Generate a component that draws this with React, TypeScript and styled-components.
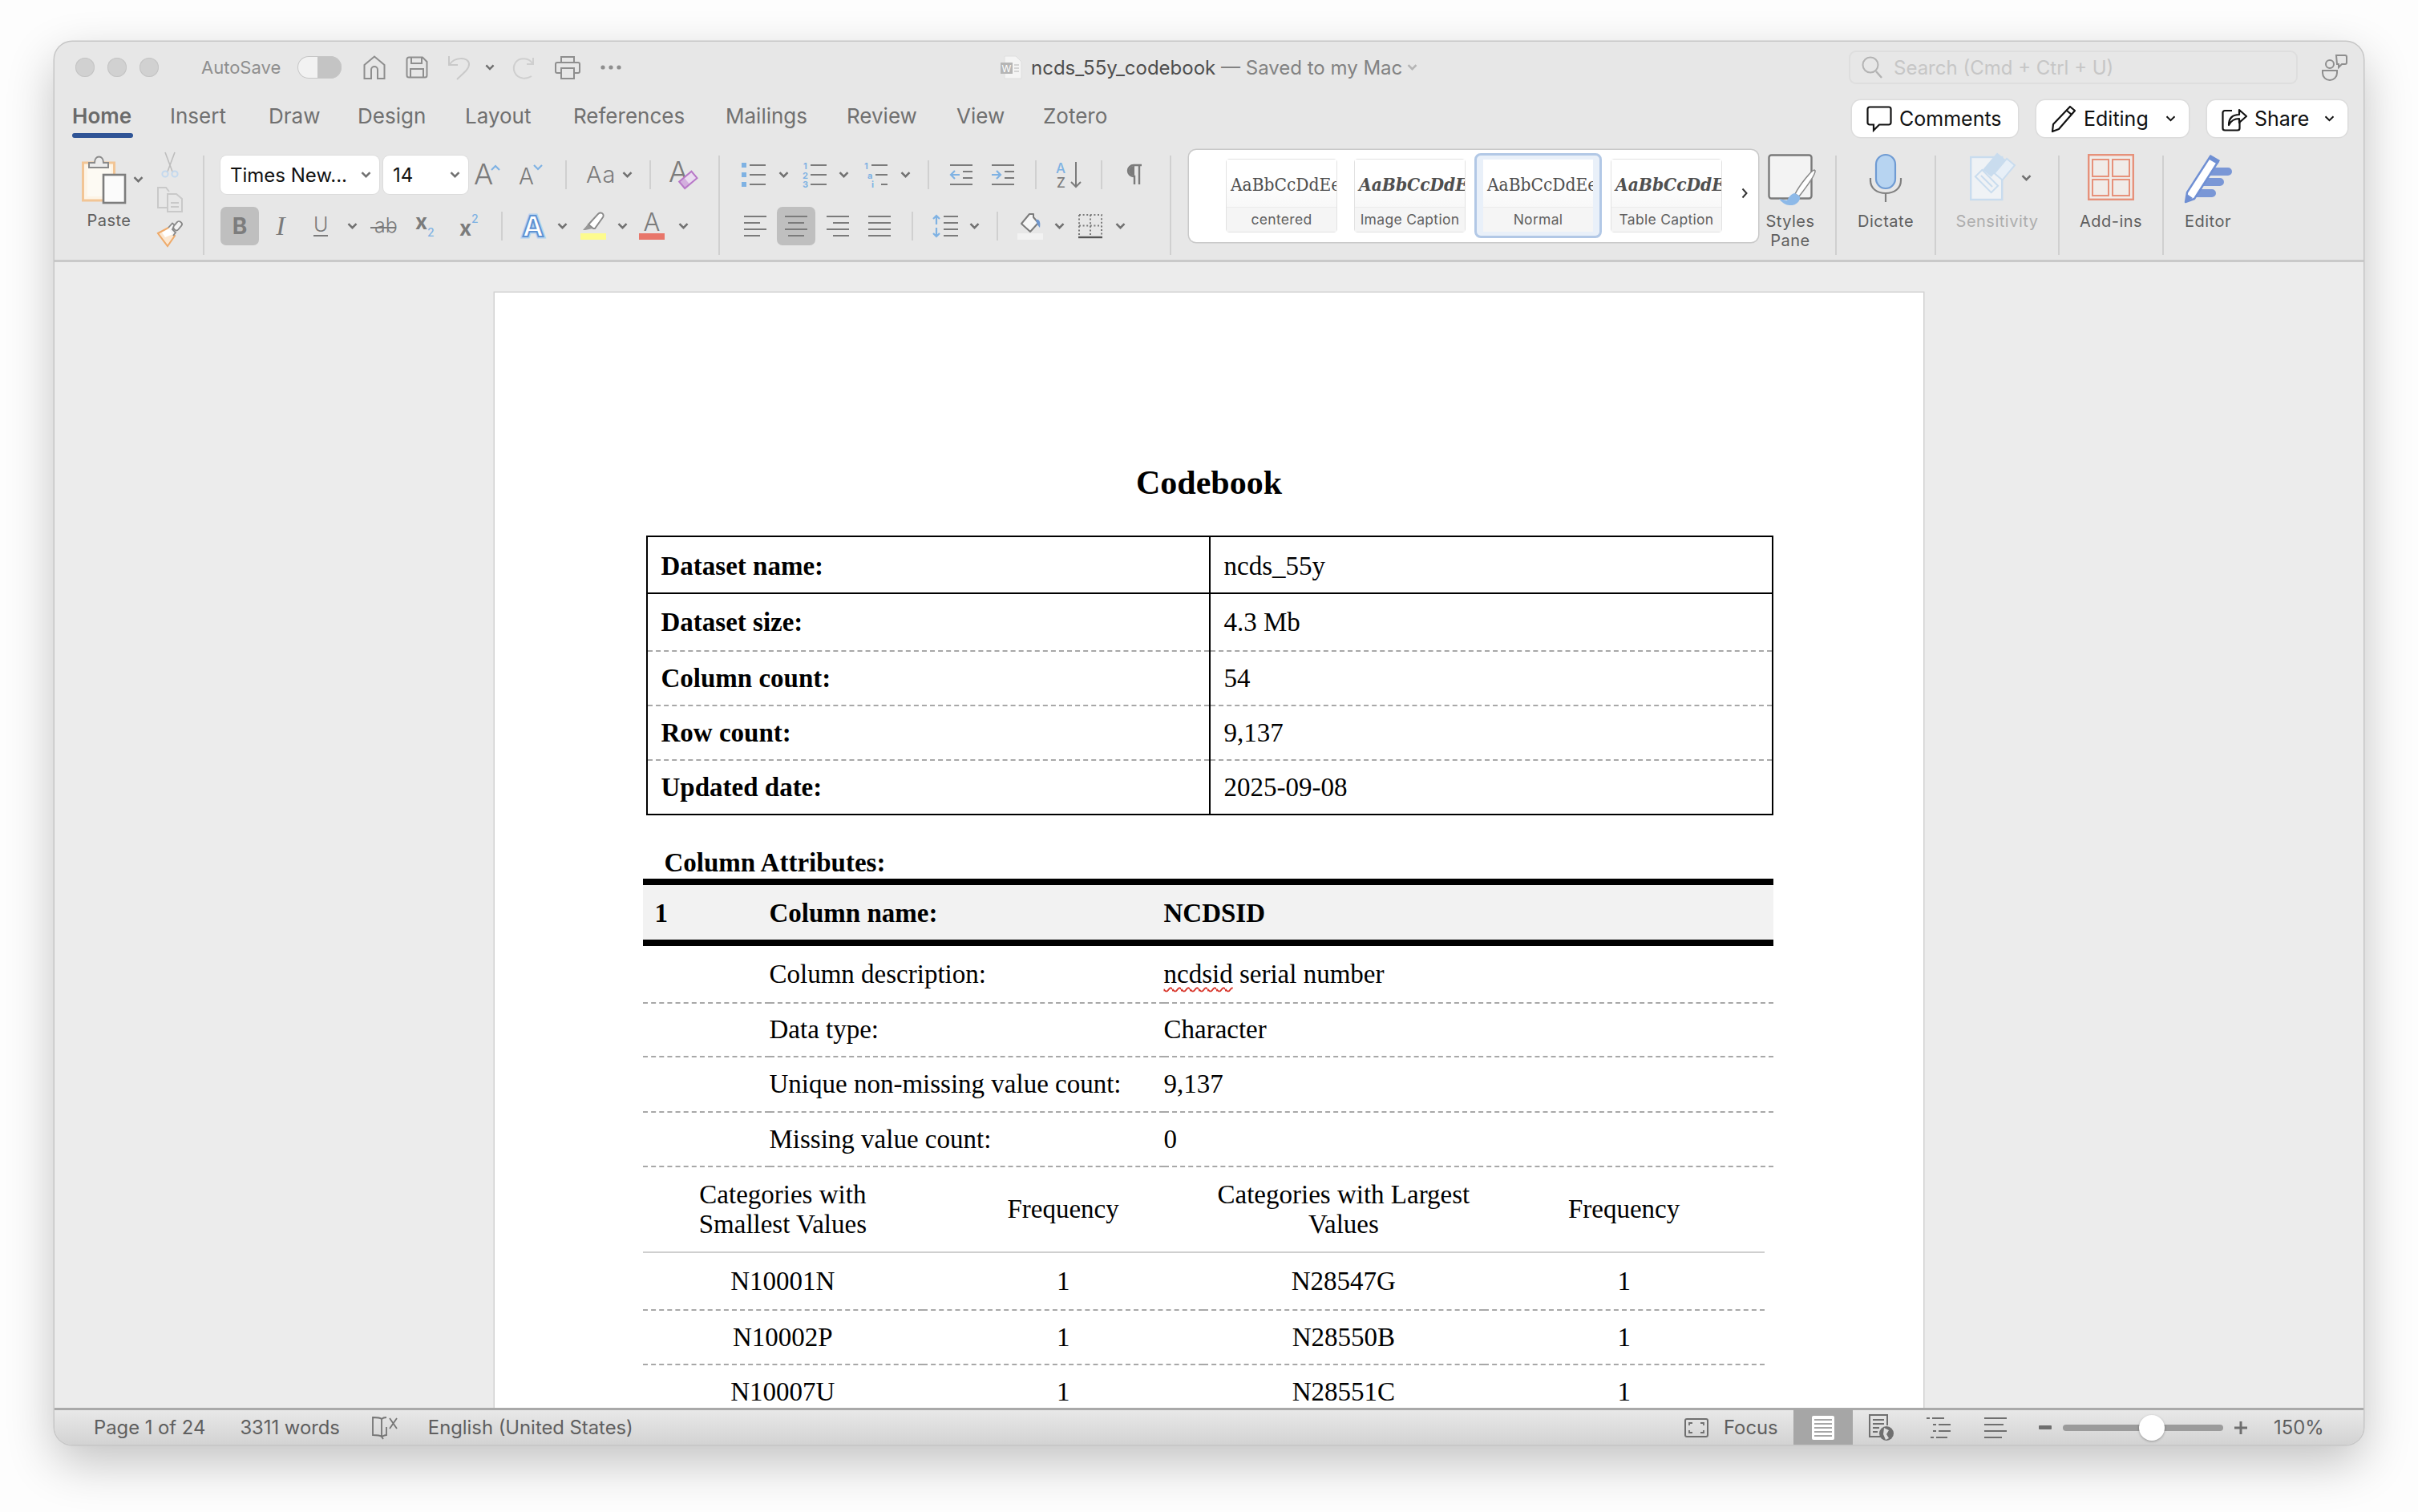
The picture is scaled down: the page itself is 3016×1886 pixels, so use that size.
import React from 'react';
import styled, { createGlobalStyle } from 'styled-components';

const GREY = '#7b7b7b';
const BLUE = '#7fb2e3';
const UI = 'Inter, "Noto Sans", sans-serif';

const GlobalStyle = createGlobalStyle`
  html, body {
    margin: 0;
    background: #fdfdfd;
    width: 3016px;
    height: 1886px;
    overflow: hidden;
  }
`;

const Ico = styled.svg`
  display: block;
  flex: none;
  overflow: visible;
`;

const svgText = { fontFamily: UI, fill: GREY } as const;

const Chevron = ({ color = '#717171', w = 13, sw = 2.6 }: { color?: string; w?: number; sw?: number }) => (
  <Ico width={w} height={8} viewBox="0 0 13 8">
    <path d="M1.5 1.2 L6.5 6.2 L11.5 1.2" fill="none" stroke={color} strokeWidth={sw} />
  </Ico>
);

const HomeIcon = () => (
  <Ico width={28} height={30} viewBox="0 0 28 30">
    <path d="M1.5 29 V12 L14 1.5 L26.5 12 V29 H18 V18 A4 4 0 0 0 10 18 V29 Z" fill="none" stroke="#8e8e8e" strokeWidth={2} />
  </Ico>
);

const SaveIcon = () => (
  <Ico width={28} height={28} viewBox="0 0 28 28">
    <path d="M1.5 4 A2.5 2.5 0 0 1 4 1.5 H21 L26.5 7 V24 A2.5 2.5 0 0 1 24 26.5 H4 A2.5 2.5 0 0 1 1.5 24 Z" fill="none" stroke="#8e8e8e" strokeWidth={2} />
    <path d="M7 2 V9 H20 V2 M6 26 V16 H22 V26" fill="none" stroke="#8e8e8e" strokeWidth={2} />
  </Ico>
);

const UndoIcon = () => (
  <Ico width={28} height={32} viewBox="0 0 28 32">
    <path d="M1 2 V13 H12 M2 12 C8 3 24 3 26 11 C27 18 18 24 11 31" fill="none" stroke="#c9c9c9" strokeWidth={2} />
  </Ico>
);

const RedoIcon = () => (
  <Ico width={28} height={30} viewBox="0 0 28 30">
    <path d="M26 3 V11 H18 M25 10 C21 3 9 2 4 9 C-1 17 3 27 13 28.5 C17 29 21 28 24 26" fill="none" stroke="#cfcfcf" strokeWidth={2} />
  </Ico>
);

const PrintIcon = () => (
  <Ico width={32} height={30} viewBox="0 0 32 30">
    <path d="M8 9 V2 H24 V9 M8 22 H3 A2 2 0 0 1 1 20 V11 A2 2 0 0 1 3 9 H29 A2 2 0 0 1 31 11 V20 A2 2 0 0 1 29 22 H24" fill="none" stroke="#8e8e8e" strokeWidth={2} />
    <rect x="8" y="16" width="16" height="13" fill="none" stroke="#8e8e8e" strokeWidth={2} />
  </Ico>
);

const DotsIcon = () => (
  <Ico width={26} height={6} viewBox="0 0 26 6">
    <circle cx="3" cy="3" r="2.6" fill="#8e8e8e" />
    <circle cx="13" cy="3" r="2.6" fill="#8e8e8e" />
    <circle cx="23" cy="3" r="2.6" fill="#8e8e8e" />
  </Ico>
);

const DocIcon = () => (
  <Ico width={28} height={30} viewBox="0 0 28 30">
    <path d="M5 1 H19 L26 8 V29 H5 Z" fill="#f4f4f4" stroke="#dedede" strokeWidth={1} />
    <rect x="0" y="9" width="15" height="14" fill="#b5b5b5" />
    <text x="1.5" y="20.5" fontFamily={UI} fontSize={12} fill="#fff">W</text>
    <path d="M17 12 H23 M17 16 H23 M17 20 H23" stroke="#c9c9c9" strokeWidth={1.5} />
  </Ico>
);

const SearchIcon = () => (
  <Ico width={26} height={28} viewBox="0 0 26 28">
    <circle cx="11" cy="11" r="9.5" fill="none" stroke="#b3b3b3" strokeWidth={2} />
    <path d="M18 19 L25 27" stroke="#b3b3b3" strokeWidth={2.4} />
  </Ico>
);

const CollabIcon = () => (
  <Ico width={32} height={34} viewBox="0 0 32 34">
    <path d="M18 2 H29 A2 2 0 0 1 31 4 V11 A2 2 0 0 1 29 13 H25 L21 17 V13 H19 Z" fill="none" stroke="#8e8e8e" strokeWidth={2} />
    <circle cx="10" cy="13" r="5" fill="none" stroke="#8e8e8e" strokeWidth={2} />
    <path d="M1 21 H19 V24 A9 9 0 0 1 1 24 Z" fill="none" stroke="#8e8e8e" strokeWidth={2} />
  </Ico>
);

const CommentIcon = () => (
  <Ico width={32} height={34} viewBox="0 0 32 32">
    <path d="M4 1.5 H28 A2.5 2.5 0 0 1 30.5 4 V21 A2.5 2.5 0 0 1 28 23.5 H16 L9 30.5 V23.5 H4 A2.5 2.5 0 0 1 1.5 21 V4 A2.5 2.5 0 0 1 4 1.5 Z" fill="none" stroke="#111" strokeWidth={2.2} />
  </Ico>
);

const PencilIcon = () => (
  <Ico width={32} height={34} viewBox="0 0 32 34">
    <path d="M24 2 L30 7 L10 30 L2 33 L3 24 Z M20 7 L26 12" fill="none" stroke="#111" strokeWidth={2.2} strokeLinejoin="round" />
  </Ico>
);

const ShareIcon = () => (
  <Ico width={32} height={34} viewBox="0 0 32 34">
    <path d="M13 7 H4 A2.5 2.5 0 0 0 1.5 9.5 V29 A2.5 2.5 0 0 0 4 31.5 H20 A2.5 2.5 0 0 0 22.5 29 V22" fill="none" stroke="#111" strokeWidth={2.2} />
    <path d="M9 25 C9 16 14 12 22 12 V6 L31 14 L22 22 V17 C16 17 12 19 9 25 Z" fill="none" stroke="#111" strokeWidth={2.2} strokeLinejoin="round" />
  </Ico>
);

const PasteIcon = () => (
  <Ico width={56} height={62} viewBox="0 0 56 62">
    <rect x="1.5" y="10" width="39" height="47" fill="#fdf4e6" stroke="#f2c595" strokeWidth={3} />
    <rect x="7" y="15" width="29" height="37" fill="#fdfaf3" />
    <path d="M9 16 V10 H16 C16 0 27 0 27 10 H33 V16 Z" fill="#ececec" stroke="#8a8a8a" strokeWidth={2} />
    <rect x="27" y="25" width="27" height="35" fill="#fbfbfb" stroke="#7d7d7d" strokeWidth={2.6} />
  </Ico>
);

const ScissorsIcon = () => (
  <Ico width={22} height={32} viewBox="0 0 22 32">
    <path d="M5 0 L14 24 M17 0 L8 24" stroke="#bdbdbd" strokeWidth={1.6} />
    <circle cx="5" cy="27" r="3.6" fill="none" stroke="#c4d9ee" strokeWidth={2} />
    <circle cx="17" cy="27" r="3.6" fill="none" stroke="#c4d9ee" strokeWidth={2} />
  </Ico>
);

const CopyIcon = () => (
  <Ico width={32} height={32} viewBox="0 0 32 32">
    <path d="M12 26 H1 V1 H11 L15 6" fill="none" stroke="#c9c9c9" strokeWidth={2} />
    <path d="M13 9 H24 L31 15 V31 H13 Z M17 20 H27 M17 25 H27" fill="none" stroke="#c9c9c9" strokeWidth={2} />
  </Ico>
);

const PainterIcon = () => (
  <Ico width={32} height={32} viewBox="0 0 32 32">
    <path d="M1 15 L14 8 L22 18 L13 31 Z" fill="#fbe7d1" stroke="#eeaa6a" strokeWidth={2} />
    <path d="M6 14 L15 9 L20 16 L10 20 Z" fill="#fff" />
    <path d="M14 8 L19 2.5 L22 5 L19 10 L23 14 L20 18" fill="#f5f5f5" stroke="#888" strokeWidth={1.8} />
    <rect x="22" y="0" width="7" height="12" rx="3" transform="rotate(40 26 6)" fill="#f3f3f3" stroke="#888" strokeWidth={1.8} />
  </Ico>
);

const GrowIcon = () => (
  <Ico width={34} height={30} viewBox="0 0 34 30">
    <text x="-1" y="27" fontSize={36} fontWeight={300} style={svgText}>A</text>
    <path d="M21 9 L26 4 L31 9" fill="none" stroke={BLUE} strokeWidth={2.2} />
  </Ico>
);

const ShrinkIcon = () => (
  <Ico width={30} height={28} viewBox="0 0 30 28">
    <text x="-1" y="26" fontSize={28} fontWeight={300} style={svgText}>A</text>
    <path d="M18 2 L23 7 L28 2" fill="none" stroke={BLUE} strokeWidth={2.2} />
  </Ico>
);

const CaseIcon = () => (
  <Ico width={34} height={24} viewBox="0 0 34 24">
    <text x="0" y="22" fontSize={29} fontWeight={300} letterSpacing={1} style={svgText}>Aa</text>
  </Ico>
);

const ClearIcon = () => (
  <Ico width={34} height={34} viewBox="0 0 34 34">
    <text x="0" y="26" fontSize={36} fontWeight={300} style={svgText}>A</text>
    <g transform="rotate(-40 24 23)">
      <rect x="14" y="18" width="20" height="11" fill="#eadcf0" stroke="#b878c8" strokeWidth={2} />
      <rect x="14" y="18" width="8" height="11" fill="#b878c8" opacity={0.45} />
    </g>
  </Ico>
);

const UnderlineIcon = () => (
  <Ico width={18} height={26} viewBox="0 0 18 26">
    <text x="0" y="20" fontSize={25} fontWeight={300} style={svgText}>U</text>
    <path d="M0 25 H18" stroke={GREY} strokeWidth={2} />
  </Ico>
);

const StrikeIcon = () => (
  <Ico width={32} height={22} viewBox="0 0 32 22">
    <text x="5" y="19" fontSize={25} fontWeight={300} style={svgText}>ab</text>
    <path d="M0 13 H32" stroke={GREY} strokeWidth={2} />
  </Ico>
);

const SubIcon = () => (
  <Ico width={24} height={28} viewBox="0 0 24 28">
    <text x="0" y="18" fontSize={26} fontWeight={700} style={svgText}>x</text>
    <text x="15" y="27" fontSize={14} fontWeight={500} style={{ fontFamily: UI, fill: BLUE }}>2</text>
  </Ico>
);

const SupIcon = () => (
  <Ico width={24} height={28} viewBox="0 0 24 28">
    <text x="0" y="26" fontSize={26} fontWeight={700} style={svgText}>x</text>
    <text x="15" y="10" fontSize={14} fontWeight={500} style={{ fontFamily: UI, fill: BLUE }}>2</text>
  </Ico>
);

const EffectIcon = () => (
  <Ico width={32} height={32} viewBox="0 0 32 32">
    <text x="16" y="29" textAnchor="middle" fontSize={36} fontWeight={700} fontFamily={UI} fill="#cfe2f6" stroke="#b4d2f0" strokeWidth={5} paintOrder="stroke">A</text>
    <text x="16" y="29" textAnchor="middle" fontSize={36} fontWeight={700} fontFamily={UI} fill="#fff" stroke="#5f92d2" strokeWidth={2}>A</text>
  </Ico>
);

const HighlightIcon = () => (
  <Ico width={32} height={34} viewBox="0 0 32 34">
    <path d="M3 22 L9 15 L15 20 L6 22 Z" fill="#999" />
    <path d="M10 15 L22 2 A3 3 0 0 1 28 6 L18 20 L16 20 Z" fill="#fff" stroke="#8a8a8a" strokeWidth={2} />
    <rect x="0" y="26" width="32" height="8" fill="#fdfb8e" />
  </Ico>
);

const FontColorIcon = () => (
  <Ico width={32} height={34} viewBox="0 0 32 34">
    <text x="16" y="23" textAnchor="middle" fontSize={31} fontWeight={300} style={svgText}>A</text>
    <rect x="0" y="26" width="32" height="8" fill="#e8766a" />
  </Ico>
);

const BulletIcon = () => (
  <Ico width={30} height={30} viewBox="0 0 30 30">
    <rect x="0" y="0" width="6" height="6" fill={BLUE} />
    <rect x="0" y="12" width="6" height="6" fill={BLUE} />
    <rect x="0" y="24" width="6" height="6" fill={BLUE} />
    <path d="M10 3 H30 M10 15 H30 M10 27 H30" stroke={GREY} strokeWidth={2} />
  </Ico>
);

const NumberIcon = () => (
  <Ico width={30} height={32} viewBox="0 0 30 32">
    <g fontFamily={UI} fontSize={11} fontWeight={700} fill={BLUE}>
      <text x="1" y="9">1</text>
      <text x="0" y="21">2</text>
      <text x="0" y="32">3</text>
    </g>
    <path d="M10 4 H30 M10 16 H30 M10 28 H30" stroke={GREY} strokeWidth={2} />
  </Ico>
);

const MultiIcon = () => (
  <Ico width={30} height={32} viewBox="0 0 30 32">
    <g fontFamily={UI} fontSize={11} fontWeight={700} fill={BLUE}>
      <text x="1" y="9">1</text>
      <text x="5" y="21">a</text>
      <text x="10" y="32">i</text>
    </g>
    <path d="M10 4 H30 M15 16 H30 M22 28 H30" stroke={GREY} strokeWidth={2} />
  </Ico>
);

const OutdentIcon = () => (
  <Ico width={28} height={26} viewBox="0 0 28 26">
    <path d="M0 1 H28 M0 25 H28 M16 9 H28 M16 17 H28" stroke={GREY} strokeWidth={2} />
    <path d="M12 13 H1 M6 8 L1 13 L6 18" fill="none" stroke={BLUE} strokeWidth={2.2} />
  </Ico>
);

const IndentIcon = () => (
  <Ico width={28} height={26} viewBox="0 0 28 26">
    <path d="M0 1 H28 M0 25 H28 M16 9 H28 M16 17 H28" stroke={GREY} strokeWidth={2} />
    <path d="M0 13 H11 M6 8 L11 13 L6 18" fill="none" stroke={BLUE} strokeWidth={2.2} />
  </Ico>
);

const SortIcon = () => (
  <Ico width={32} height={32} viewBox="0 0 32 32">
    <text x="0" y="14" fontSize={17} fontWeight={500} style={{ fontFamily: UI, fill: BLUE }}>A</text>
    <text x="1" y="32" fontSize={17} fontWeight={500} style={svgText}>Z</text>
    <path d="M25 0 V31 M19 25 L25 31 L31 25" fill="none" stroke={GREY} strokeWidth={2} />
  </Ico>
);

const PilcrowIcon = () => (
  <Ico width={20} height={26} viewBox="0 0 20 26">
    <path d="M19 1 H9 A7 7 0 0 0 9 15 H10 V25 M16 1 V25" fill="none" stroke={GREY} strokeWidth={2.4} />
    <path d="M10 2 H9 A6 6 0 0 0 9 14 H10 Z" fill={GREY} />
  </Ico>
);

const AlignIcon = ({ kind }: { kind: 'left' | 'center' | 'right' | 'justify' }) => {
  const d = {
    left: 'M0 1 H28 M0 9 H20 M0 17 H28 M0 25 H20',
    center: 'M0 1 H28 M4 9 H24 M0 17 H28 M4 25 H24',
    right: 'M0 1 H28 M8 9 H28 M0 17 H28 M8 25 H28',
    justify: 'M0 1 H28 M0 9 H28 M0 17 H28 M0 25 H28',
  }[kind];
  return (
    <Ico width={28} height={26} viewBox="0 0 28 26">
      <path d={d} stroke={GREY} strokeWidth={2} />
    </Ico>
  );
};

const SpacingIcon = () => (
  <Ico width={32} height={30} viewBox="0 0 32 30">
    <path d="M14 3 H32 M14 11 H32 M14 19 H32 M14 27 H32" stroke={GREY} strokeWidth={2} />
    <path d="M5 13 V2 M1 6 L5 2 L9 6 M5 17 V28 M1 24 L5 28 L9 24" fill="none" stroke={BLUE} strokeWidth={2.2} />
  </Ico>
);

const ShadingIcon = () => (
  <Ico width={32} height={34} viewBox="0 0 32 34">
    <path d="M5 14 L15 2 L20 2 L20 6 L26 13 L16 24 Z" fill="#f6f6f6" stroke={GREY} strokeWidth={2} strokeLinejoin="round" />
    <path d="M23 9 C28 8 29 13 28 19 C26 17 24 14 23 9 Z" fill="#6f97cf" />
    <rect x="0" y="26" width="32" height="8" fill="#f2f2f2" />
  </Ico>
);

const BordersIcon = () => (
  <Ico width={30} height={30} viewBox="0 0 30 30">
    <path d="M1 1 H29 V28 M1 1 V28 M15 1 V28 M1 14.5 H29" fill="none" stroke={GREY} strokeWidth={2} strokeDasharray="2 2.6" />
    <path d="M0 29 H30" stroke="#555" strokeWidth={2.4} />
  </Ico>
);

const StylesPaneIcon = () => (
  <Ico width={62} height={66} viewBox="0 0 62 66">
    <rect x="1.5" y="1.5" width="53" height="54" rx="3" fill="#f3f3f3" stroke="#7a7a7a" strokeWidth={2.4} />
    <path d="M58 20 C55 20 40 38 34 50 L39 53 C46 44 60 26 59 21 Z" fill="#fff" stroke="#8a8a8a" strokeWidth={1.6} />
    <path d="M14 56 L24 58 C27 52 31 49 34 49 L40 53 C41 59 35 65 27 64 C22 64 17 60 14 56 Z" fill="#8db9e8" />
  </Ico>
);

const MicIcon = () => (
  <Ico width={40} height={60} viewBox="0 0 40 60">
    <rect x="8" y="1" width="24" height="42" rx="12" fill="#b7d4f1" stroke="#6f9bd3" strokeWidth={2.2} />
    <path d="M1 30 V33 C1 43 9 49 20 49 C31 49 39 43 39 33 V30 M20 49 V60" fill="none" stroke="#808080" strokeWidth={2.2} />
  </Ico>
);

const SensitivityIcon = () => (
  <Ico width={54} height={58} viewBox="0 0 54 58">
    <rect x="1.2" y="4" width="39" height="53" fill="#eff2f5" stroke="#c9dcee" strokeWidth={2.4} />
    <g transform="rotate(45 21 34)" fill="none" stroke="#c9dcee" strokeWidth={2}>
      <rect x="7" y="28" width="28" height="12" />
      <path d="M11 34 H31" />
    </g>
    <g transform="rotate(40 34 14)">
      <rect x="24" y="2" width="14" height="28" fill="#c9dcee" />
      <rect x="38" y="0" width="13" height="24" fill="#e7eff7" stroke="#c9dcee" strokeWidth={2} />
    </g>
  </Ico>
);

const AddinsIcon = () => (
  <Ico width={58} height={58} viewBox="0 0 58 58">
    <rect x="1.2" y="1.2" width="55.6" height="55.6" fill="#f0ece9" stroke="#e6917a" strokeWidth={2.4} />
    <rect x="6" y="7" width="20" height="21" fill="none" stroke="#e6917a" strokeWidth={2} />
    <rect x="31" y="7" width="21" height="21" fill="none" stroke="#e6917a" strokeWidth={2} />
    <rect x="6" y="32" width="20" height="20" fill="none" stroke="#e6917a" strokeWidth={2} />
    <rect x="31" y="32" width="21" height="20" fill="none" stroke="#e6917a" strokeWidth={2} />
  </Ico>
);

const EditorIcon = () => (
  <Ico width={62} height={62} viewBox="0 0 62 62">
    <path d="M37 17 H56 A5 5 0 0 1 56 27 H33 Z M29 30 H46 A5 5 0 0 1 46 40 H24 Z M19 44 H36 A5 5 0 0 1 36 54 H14 Z" fill="#7a97d6" />
    <path d="M34 3 L44 9 L14 56 L3 60 L5 48 Z" fill="#fff" stroke="#6f8fd3" strokeWidth={2.4} strokeLinejoin="round" />
    <path d="M34 1 L46 8 L43 13 L31 6 Z" fill="#6f8fd3" />
    <path d="M5 50 L12 55 L2 61 Z" fill="#6f8fd3" />
  </Ico>
);

const BookIcon = () => (
  <Ico width={32} height={30} viewBox="0 0 32 30">
    <path d="M12 4 C10 2 6 2 1 2 V24 C6 24 10 24 12 26 L14 29 M12 4 V26 M12 4 C14 2 16 2 18 2 M18 14 V24 C16 24 14 25 12 26" fill="none" stroke="#757575" strokeWidth={1.8} />
    <path d="M22 3 L31 16 M31 3 L22 16" stroke="#757575" strokeWidth={1.8} />
  </Ico>
);

const FocusIcon = () => (
  <Ico width={30} height={24} viewBox="0 0 30 24">
    <rect x="1" y="1" width="28" height="22" rx="2" fill="none" stroke="#6f6f6f" strokeWidth={2} />
    <path d="M6 9 V6 H10 M24 9 V6 H20 M6 15 V18 H10 M24 15 V18 H20" fill="none" stroke="#6f6f6f" strokeWidth={1.8} />
  </Ico>
);

const PrintViewIcon = () => (
  <Ico width={28} height={30} viewBox="0 0 28 30">
    <rect x="0" y="0" width="28" height="30" rx="2" fill="#fff" />
    <path d="M3 5 H25 M3 10 H25 M3 15 H25 M3 20 H25 M3 25 H25" stroke="#a6a6a6" strokeWidth={2} />
  </Ico>
);

const WebViewIcon = () => (
  <Ico width={32} height={34} viewBox="0 0 32 34">
    <path d="M16 28 H2 V1 H24 V14" fill="none" stroke="#6f6f6f" strokeWidth={2} />
    <path d="M6 7 H20 M6 12 H20 M6 17 H14 M6 22 H12" stroke="#6f6f6f" strokeWidth={2} />
    <circle cx="23" cy="24" r="9" fill="#6f6f6f" />
    <path d="M20 17 L26 20 L23 25 L26 30 L22 32 L19 25 Z" fill="#ddd" />
  </Ico>
);

const OutlineViewIcon = () => (
  <Ico width={30} height={28} viewBox="0 0 30 28">
    <path d="M0 2 H4 M7 2 H22 M8 10 H12 M15 10 H30 M8 18 H12 M15 18 H30 M5 26 H9 M12 26 H26" stroke="#6f6f6f" strokeWidth={2} />
  </Ico>
);

const DraftViewIcon = () => (
  <Ico width={28} height={28} viewBox="0 0 28 28">
    <path d="M0 2 H28 M0 10 H24 M0 18 H28 M0 26 H22" stroke="#6f6f6f" strokeWidth={2.2} />
  </Ico>
);

const App = () => (
  <>
    <GlobalStyle />
    <Shell>
      <Window>
        <TitleBar>
          <QuickAccess>
            <Lights>
              <Light />
              <Light />
              <Light />
            </Lights>
            <AutoSave>AutoSave</AutoSave>
            <Toggle />
            <HomeIcon />
            <SaveIcon />
            <UndoIcon />
            <UndoChevron><Chevron color="#6f6f6f" w={12} /></UndoChevron>
            <RedoIcon />
            <PrintIcon />
            <DotsIcon />
          </QuickAccess>
          <DocTitle>
            <DocIcon />
            <TitleText>
              ncds_55y_codebook <Saved>— Saved to my Mac</Saved>
            </TitleText>
            <Chevron color="#b5b5b5" w={13} />
          </DocTitle>
          <SearchBox>
            <SearchIcon />
            <SearchText>Search (Cmd + Ctrl + U)</SearchText>
          </SearchBox>
          <CollabIcon />
        </TitleBar>

        <TabRow>
          <Tab $w={122} $active>Home</Tab>
          <Tab $w={123}>Insert</Tab>
          <Tab $w={111}>Draw</Tab>
          <Tab $w={134}>Design</Tab>
          <Tab $w={135}>Layout</Tab>
          <Tab $w={190}>References</Tab>
          <Tab $w={151}>Mailings</Tab>
          <Tab $w={137}>Review</Tab>
          <Tab $w={108}>View</Tab>
          <Tab $w={100}>Zotero</Tab>
          <TabActions>
            <PillButton $w={207}>
              <CommentIcon />
              Comments
            </PillButton>
            <PillButton $w={190}>
              <PencilIcon />
              Editing
              <PillChevron><Chevron color="#111" w={15} sw={2} /></PillChevron>
            </PillButton>
            <PillButton $w={175}>
              <ShareIcon />
              Share
              <PillChevron><Chevron color="#111" w={15} sw={2} /></PillChevron>
            </PillButton>
          </TabActions>
        </TabRow>

        <Ribbon>
          <PasteGroup>
            <PasteCol>
              <PasteTop>
                <PasteIcon />
                <Chevron />
              </PasteTop>
              <ToolLabel>Paste</ToolLabel>
            </PasteCol>
            <ClipCol>
              <ScissorsIcon />
              <CopyIcon />
              <PainterIcon />
            </ClipCol>
          </PasteGroup>
          <GroupSep />

          <FontGroup>
            <ToolRow>
              <Select $w={198}>
                Times New...
                <Chevron />
              </Select>
              <Select $w={106} $left={5}>
                14
                <Chevron />
              </Select>
              <Tool $w={50}><GrowIcon /></Tool>
              <Tool $w={58}><ShrinkIcon /></Tool>
              <Tool $w={28}><RowSep /></Tool>
              <Tool $w={56}><CaseIcon /></Tool>
              <Tool $w={12}><Chevron /></Tool>
              <Tool $w={46}><RowSep /></Tool>
              <Tool $w={34}><ClearIcon /></Tool>
            </ToolRow>
            <ToolRow>
              <ActiveTool><BoldMark>B</BoldMark></ActiveTool>
              <Tool $w={54}><ItalicMark>I</ItalicMark></Tool>
              <Tool $w={46}><UnderlineIcon /></Tool>
              <Tool $w={32}><Chevron /></Tool>
              <Tool $w={46}><StrikeIcon /></Tool>
              <Tool $w={58}><SubIcon /></Tool>
              <Tool $w={52}><SupIcon /></Tool>
              <Tool $w={30}><RowSep /></Tool>
              <Tool $w={48}><EffectIcon /></Tool>
              <Tool $w={24}><Chevron /></Tool>
              <Tool $w={54}><HighlightIcon /></Tool>
              <Tool $w={18}><Chevron /></Tool>
              <Tool $w={56}><FontColorIcon /></Tool>
              <Tool $w={22}><Chevron /></Tool>
            </ToolRow>
          </FontGroup>
          <GroupSep />

          <ParaGroup>
            <ToolRow>
              <Tool $w={50}><BulletIcon /></Tool>
              <Tool $w={24}><Chevron /></Tool>
              <Tool $w={54}><NumberIcon /></Tool>
              <Tool $w={18}><Chevron /></Tool>
              <Tool $w={62}><MultiIcon /></Tool>
              <Tool $w={12}><Chevron /></Tool>
              <Tool $w={46}><RowSep /></Tool>
              <Tool $w={36}><OutdentIcon /></Tool>
              <Tool $w={68}><IndentIcon /></Tool>
              <Tool $w={14}><RowSep /></Tool>
              <Tool $w={68}><SortIcon /></Tool>
              <Tool $w={14}><RowSep /></Tool>
              <Tool $w={68}><PilcrowIcon /></Tool>
            </ToolRow>
            <ToolRow>
              <Tool $w={54}><AlignIcon kind="left" /></Tool>
              <ActiveTool><AlignIcon kind="center" /></ActiveTool>
              <Tool $w={56}><AlignIcon kind="right" /></Tool>
              <Tool $w={48}><AlignIcon kind="justify" /></Tool>
              <Tool $w={34}><RowSep /></Tool>
              <Tool $w={48}><SpacingIcon /></Tool>
              <Tool $w={24}><Chevron /></Tool>
              <Tool $w={34}><RowSep /></Tool>
              <Tool $w={48}><ShadingIcon /></Tool>
              <Tool $w={24}><Chevron /></Tool>
              <Tool $w={54}><BordersIcon /></Tool>
              <Tool $w={20}><Chevron /></Tool>
            </ToolRow>
          </ParaGroup>
          <GroupSep />

          <Gallery>
            <StyleTile label="centered" />
            <StyleTile label="Image Caption" emphasis />
            <StyleTile label="Normal" selected />
            <StyleTile label="Table Caption" emphasis />
            <GalleryNext>
              <Ico width={8} height={14} viewBox="0 0 8 14">
                <path d="M1.5 1.5 L6.5 7 L1.5 12.5" fill="none" stroke="#333" strokeWidth={2} />
              </Ico>
            </GalleryNext>
          </Gallery>

          <BigTool $w={80} $after={16}>
            <IconSlot $lead={5}><StylesPaneIcon /></IconSlot>
            <ToolLabel>Styles<br />Pane</ToolLabel>
          </BigTool>
          <GroupSep />
          <BigTool $w={122}>
            <IconSlot><MicIcon /></IconSlot>
            <ToolLabel>Dictate</ToolLabel>
          </BigTool>
          <GroupSep />
          <BigTool $w={152}>
            <IconSlot $trail={14}>
              <SensitivityIcon />
              <SensitivityChevron><Chevron /></SensitivityChevron>
            </IconSlot>
            <ToolLabel $muted>Sensitivity</ToolLabel>
          </BigTool>
          <GroupSep />
          <BigTool $w={128}>
            <IconSlot><AddinsIcon /></IconSlot>
            <ToolLabel>Add-ins</ToolLabel>
          </BigTool>
          <GroupSep />
          <BigTool $w={110}>
            <IconSlot><EditorIcon /></IconSlot>
            <ToolLabel>Editor</ToolLabel>
          </BigTool>
        </Ribbon>

        <Canvas>
          <Page>
            <DocTitleLine>Codebook</DocTitleLine>
            <InfoTable>
              <colgroup>
                <col width={702} />
                <col />
              </colgroup>
              <tbody>
                <InfoRow $h={71} $solid $lift>
                  <InfoKey>Dataset name:</InfoKey>
                  <InfoValue>ncds_55y</InfoValue>
                </InfoRow>
                <InfoRow $h={72}>
                  <InfoKey>Dataset size:</InfoKey>
                  <InfoValue>4.3 Mb</InfoValue>
                </InfoRow>
                <InfoRow $h={68}>
                  <InfoKey>Column count:</InfoKey>
                  <InfoValue>54</InfoValue>
                </InfoRow>
                <InfoRow $h={68}>
                  <InfoKey>Row count:</InfoKey>
                  <InfoValue>9,137</InfoValue>
                </InfoRow>
                <InfoRow $h={68}>
                  <InfoKey>Updated date:</InfoKey>
                  <InfoValue>2025-09-08</InfoValue>
                </InfoRow>
              </tbody>
            </InfoTable>

            <SectionHeading>Column Attributes:</SectionHeading>
            <AttrTable>
              <colgroup>
                <col width={158} />
                <col width={492} />
                <col />
              </colgroup>
              <tbody>
                <AttrHead>
                  <AttrIndex>1</AttrIndex>
                  <AttrCell>Column name:</AttrCell>
                  <AttrCell>NCDSID</AttrCell>
                </AttrHead>
                <AttrRow $h={75}>
                  <AttrCell />
                  <AttrCell>Column description:</AttrCell>
                  <AttrCell><Misspelt>ncdsid</Misspelt> serial number</AttrCell>
                </AttrRow>
                <AttrRow $h={67}>
                  <AttrCell />
                  <AttrCell>Data type:</AttrCell>
                  <AttrCell>Character</AttrCell>
                </AttrRow>
                <AttrRow $h={69}>
                  <AttrCell />
                  <AttrCell>Unique non-missing value count:</AttrCell>
                  <AttrCell>9,137</AttrCell>
                </AttrRow>
                <AttrRow $h={68}>
                  <AttrCell />
                  <AttrCell>Missing value count:</AttrCell>
                  <AttrCell>0</AttrCell>
                </AttrRow>
              </tbody>
            </AttrTable>

            <CategoryTable>
              <tbody>
                <CategoryRow $h={106} $head>
                  <CategoryCell>Categories with<br />Smallest Values</CategoryCell>
                  <CategoryCell>Frequency</CategoryCell>
                  <CategoryCell>Categories with Largest<br />Values</CategoryCell>
                  <CategoryCell>Frequency</CategoryCell>
                </CategoryRow>
                <CategoryRow $h={72}>
                  <CategoryCell>N10001N</CategoryCell>
                  <CategoryCell>1</CategoryCell>
                  <CategoryCell>N28547G</CategoryCell>
                  <CategoryCell>1</CategoryCell>
                </CategoryRow>
                <CategoryRow $h={68}>
                  <CategoryCell>N10002P</CategoryCell>
                  <CategoryCell>1</CategoryCell>
                  <CategoryCell>N28550B</CategoryCell>
                  <CategoryCell>1</CategoryCell>
                </CategoryRow>
                <CategoryRow $h={68}>
                  <CategoryCell>N10007U</CategoryCell>
                  <CategoryCell>1</CategoryCell>
                  <CategoryCell>N28551C</CategoryCell>
                  <CategoryCell>1</CategoryCell>
                </CategoryRow>
              </tbody>
            </CategoryTable>
          </Page>
        </Canvas>

        <StatusBar>
          <StatusLeft>
            <StatusText>Page 1 of 24</StatusText>
            <StatusText>3311 words</StatusText>
            <BookSlot><BookIcon /></BookSlot>
            <StatusText>English (United States)</StatusText>
          </StatusLeft>
          <StatusRight>
            <FocusIcon />
            <FocusLabel>Focus</FocusLabel>
            <ViewActive><PrintViewIcon /></ViewActive>
            <ViewSlot $w={70}><WebViewIcon /></ViewSlot>
            <ViewSlot $w={74}><OutlineViewIcon /></ViewSlot>
            <ViewSlot $w={68}><DraftViewIcon /></ViewSlot>
            <ZoomMinus />
            <ZoomTrack>
              <ZoomThumb />
            </ZoomTrack>
            <ZoomPlus>
              <Ico width={16} height={16} viewBox="0 0 16 16">
                <path d="M0 8 H16 M8 0 V16" stroke="#6f6f6f" strokeWidth={3} />
              </Ico>
            </ZoomPlus>
            <ZoomValue>150%</ZoomValue>
          </StatusRight>
        </StatusBar>
      </Window>
    </Shell>
  </>
);

const StyleTile = ({ label, emphasis, selected }: { label: string; emphasis?: boolean; selected?: boolean }) => (
  <Tile $selected={selected}>
    <TileSample $emphasis={emphasis}>AaBbCcDdEe</TileSample>
    <TileLabel>{label}</TileLabel>
  </Tile>
);

const Shell = styled.div`
  box-sizing: border-box;
  width: 3016px;
  height: 1886px;
  padding: 52px 68px 84px 68px;
  font-family: ${UI};
`;

const Window = styled.div`
  box-sizing: border-box;
  width: 2880px;
  height: 1750px;
  display: flex;
  flex-direction: column;
  overflow: hidden;
  background: #e7e7e7;
  border-radius: 22px;
  box-shadow: 0 0 0 1.5px #c6c6c6, 0 22px 60px rgba(0, 0, 0, 0.24);
`;

const TitleBar = styled.div`
  flex: none;
  height: 64px;
  display: flex;
  align-items: center;
`;

const QuickAccess = styled.div`
  flex: none;
  width: 1180px;
  box-sizing: border-box;
  padding-left: 26px;
  display: flex;
  align-items: center;
  gap: 25px;
`;

const UndoChevron = styled.div`
  margin: 0 -3px 0 -7px;
`;

const Lights = styled.div`
  display: flex;
  gap: 16px;
  margin-right: 28px;
`;

const Light = styled.div`
  width: 24px;
  height: 24px;
  border-radius: 50%;
  background: #d1d1d1;
  box-shadow: inset 0 0 0 1px #c4c4c4;
`;

const AutoSave = styled.span`
  width: 100px;
  margin-right: -5px;
  font-size: 22px;
  color: #8f8f8f;
`;

const Toggle = styled.div`
  width: 55px;
  height: 28px;
  border-radius: 14px;
  background: linear-gradient(90deg, #f2f2f2 0 45%, #c4c4c4 45%);
  box-shadow: inset 0 0 0 1px #c6c6c6;
  margin-right: 2px;
`;

const DocTitle = styled.div`
  flex: none;
  width: 1058px;
  display: flex;
  align-items: center;
  gap: 10px;
`;

const TitleText = styled.span`
  font-size: 24px;
  color: #4e4e4e;
  margin-right: -4px;
  white-space: pre;
`;

const Saved = styled.span`
  color: #828282;
`;

const SearchBox = styled.div`
  flex: none;
  box-sizing: border-box;
  width: 560px;
  height: 42px;
  margin-right: 30px;
  padding-left: 14px;
  display: flex;
  align-items: center;
  gap: 14px;
  border: 2px solid #dedede;
  border-radius: 9px;
`;

const SearchText = styled.span`
  font-size: 24px;
  color: #c6c6c6;
`;

const TabRow = styled.div`
  flex: none;
  height: 59px;
  box-sizing: border-box;
  padding: 0 20px 2px 22px;
  display: flex;
  align-items: center;
`;

const Tab = styled.div<{ $w: number; $active?: boolean }>`
  position: relative;
  flex: none;
  width: ${(p) => p.$w}px;
  font-size: 26px;
  font-weight: ${(p) => (p.$active ? 600 : 400)};
  color: ${(p) => (p.$active ? '#6a6a6a' : '#707070')};

  &::after {
    content: '';
    display: ${(p) => (p.$active ? 'block' : 'none')};
    position: absolute;
    left: 0;
    bottom: -12px;
    width: 76px;
    height: 6px;
    border-radius: 3px;
    background: #2f5496;
  }
`;

const TabActions = styled.div`
  margin: 6px 0 0 auto;
  display: flex;
  gap: 23px;
`;

const PillButton = styled.div<{ $w: number }>`
  box-sizing: border-box;
  width: ${(p) => p.$w}px;
  height: 46px;
  padding: 0 15px 0 18px;
  display: flex;
  align-items: center;
  gap: 9px;
  background: #fff;
  border-radius: 11px;
  box-shadow: 0 0 0 1.5px #dcdcdc;
  font-size: 25px;
  color: #111;
`;

const PillChevron = styled.div`
  margin-left: auto;
`;

const Ribbon = styled.div`
  flex: none;
  height: 152px;
  box-sizing: border-box;
  display: flex;
  align-items: flex-start;
  border-bottom: 3px solid #c9c9c9;
`;

const GroupSep = styled.div`
  flex: none;
  width: 2px;
  height: 124px;
  margin-top: 19px;
  background: #d0d0d0;
`;

const PasteGroup = styled.div`
  flex: none;
  width: 185px;
  box-sizing: border-box;
  padding: 18px 0 0 34px;
  display: flex;
`;

const PasteCol = styled.div`
  width: 92px;
  display: flex;
  flex-direction: column;
  align-items: flex-start;
  gap: 6px;
`;

const PasteTop = styled.div`
  display: flex;
  align-items: center;
  gap: 8px;
  margin-bottom: 2px;
`;

const ClipCol = styled.div`
  display: flex;
  flex-direction: column;
  align-items: center;
  gap: 11px;
  width: 36px;
  margin-top: -3px;
`;

const ToolLabel = styled.div<{ $muted?: boolean }>`
  font-size: 20px;
  line-height: 24px;
  letter-spacing: 0.5px;
  text-align: center;
  color: ${(p) => (p.$muted ? '#aeaeae' : '#5f5f5f')};
  ${PasteCol} & {
    width: 68px;
  }
`;

const FontGroup = styled.div`
  flex: none;
  width: 641px;
  box-sizing: border-box;
  padding: 19px 0 0 20px;
  display: flex;
  flex-direction: column;
  gap: 16px;
`;

const ParaGroup = styled.div`
  flex: none;
  width: 561px;
  box-sizing: border-box;
  padding: 19px 0 0 17px;
  display: flex;
  flex-direction: column;
  gap: 16px;
`;

const ToolRow = styled.div`
  height: 48px;
  display: flex;
  align-items: center;
`;

const Tool = styled.div<{ $w: number }>`
  flex: none;
  width: ${(p) => p.$w}px;
  height: 48px;
  display: flex;
  align-items: center;
  justify-content: center;
`;

const ActiveTool = styled.div`
  flex: none;
  width: 48px;
  height: 48px;
  display: flex;
  align-items: center;
  justify-content: center;
  background: #bfbfbf;
  border-radius: 7px;
`;

const BoldMark = styled.span`
  font-size: 28px;
  font-weight: 700;
  color: #7d7d7d;
`;

const ItalicMark = styled.span`
  font-family: 'Liberation Serif', serif;
  font-style: italic;
  font-size: 34px;
  color: ${GREY};
`;

const RowSep = styled.div`
  flex: none;
  width: 2px;
  height: 36px;
  background: #d0d0d0;
`;

const Select = styled.div<{ $w: number; $left?: number }>`
  flex: none;
  box-sizing: border-box;
  width: ${(p) => p.$w}px;
  height: 48px;
  margin-left: ${(p) => p.$left || 0}px;
  padding: 0 10px 0 12px;
  display: flex;
  align-items: center;
  justify-content: space-between;
  background: #fff;
  border-radius: 8px;
  box-shadow: 0 0 0 1px #dcdcdc;
  font-size: 24px;
  color: #111;
`;

const Gallery = styled.div`
  flex: none;
  box-sizing: border-box;
  width: 710px;
  height: 115px;
  margin: 12px 0 0 22px;
  padding: 11px 0 0 46px;
  display: flex;
  gap: 21px;
  background: #fff;
  border-radius: 9px;
  box-shadow: 0 0 0 1.5px #c9c9c9;
`;

const Tile = styled.div<{ $selected?: boolean }>`
  position: relative;
  flex: none;
  box-sizing: border-box;
  width: 139px;
  height: 92px;
  display: flex;
  flex-direction: column;
  background: linear-gradient(#fff 40%, #f6f6f6);
  border: 1.5px solid #e2e2e2;
  border-radius: 4px;

  &::before {
    content: '';
    display: ${(p) => (p.$selected ? 'block' : 'none')};
    position: absolute;
    inset: -8px -11px;
    z-index: 0;
    background: #e9f0f9;
    border: 3px solid #b2c8e6;
    border-radius: 8px;
  }
`;

const TileSample = styled.div<{ $emphasis?: boolean }>`
  position: relative;
  flex: 1;
  padding: 18px 0 0 5px;
  overflow: hidden;
  white-space: nowrap;
  font-family: 'DejaVu Serif Condensed', 'DejaVu Serif', serif;
  font-stretch: condensed;
  font-size: 22.5px;
  font-style: ${(p) => (p.$emphasis ? 'italic' : 'normal')};
  font-weight: ${(p) => (p.$emphasis ? 700 : 400)};
  color: #4f4f4f;
  background: linear-gradient(#fff 40%, #f8f8f8);
`;

const TileLabel = styled.div`
  position: relative;
  height: 30px;
  line-height: 30px;
  text-align: center;
  white-space: nowrap;
  overflow: hidden;
  font-size: 17.5px;
  letter-spacing: 0.3px;
  color: #5f5f5f;
  background: #f5f5f5;
  border-top: 1px solid #ececec;
`;

const GalleryNext = styled.div`
  width: 8px;
  margin: 36px 0 0 -4px;
  padding-left: 7px;
`;

const BigTool = styled.div<{ $w: number; $after?: number }>`
  flex: none;
  width: ${(p) => p.$w}px;
  margin-right: ${(p) => p.$after || 0}px;
  padding-top: 17px;
  display: flex;
  flex-direction: column;
  align-items: center;
`;

const IconSlot = styled.div<{ $lead?: number; $trail?: number }>`
  position: relative;
  height: 66px;
  margin-bottom: 6px;
  padding-left: ${(p) => p.$lead || 0}px;
  padding-right: ${(p) => p.$trail || 0}px;
`;

const SensitivityChevron = styled.div`
  position: absolute;
  left: 64px;
  top: 26px;
`;

const Canvas = styled.div`
  flex: 1;
  min-height: 0;
  overflow: hidden;
  background: #ececec;
  display: flex;
  justify-content: center;
  padding-top: 38px;
`;

const Page = styled.div`
  flex: none;
  box-sizing: border-box;
  width: 1782px;
  height: 1500px;
  margin-right: 1px;
  padding: 212px 0 0 185px;
  background: #fff;
  box-shadow: 0 0 0 1.5px #d2d2d2;
  font-family: 'Liberation Serif', serif;
  font-size: 33px;
  color: #000;
`;

const DocTitleLine = styled.div`
  width: 1405px;
  margin-left: 4px;
  text-align: center;
  font-size: 42px;
  line-height: 50px;
  font-weight: 700;
`;

const InfoTable = styled.table`
  width: 1406px;
  margin: 41px 0 0 4px;
  table-layout: fixed;
  border-collapse: collapse;
  border: 2px solid #000;
`;

const InfoRow = styled.tr<{ $h: number; $solid?: boolean; $lift?: boolean }>`
  height: ${(p) => p.$h}px;
  border-bottom: ${(p) => (p.$solid ? '2px solid #000' : '2px dashed #a8a8a8')};
  td {
    padding-top: ${(p) => (p.$lift ? 4 : 0)}px;
  }
`;

const InfoKey = styled.td`
  padding: 0 0 0 17px;
  font-weight: 700;
  border-right: 2px solid #000;
`;

const InfoValue = styled.td`
  padding: 0 0 0 17px;
`;

const SectionHeading = styled.div`
  margin: 39px 0 0 27px;
  height: 40px;
  line-height: 40px;
  font-weight: 700;
`;

const AttrTable = styled.table`
  width: 1410px;
  table-layout: fixed;
  border-collapse: collapse;
`;

const AttrHead = styled.tr`
  height: 76px;
  font-weight: 700;
  background: #f2f2f2;
  border-top: 8px solid #000;
  border-bottom: 8px solid #000;
  td {
    padding-top: 3px;
  }
`;

const AttrRow = styled.tr<{ $h: number }>`
  height: ${(p) => p.$h}px;
  border-bottom: 2px dashed #a8a8a8;
`;

const AttrIndex = styled.td`
  padding: 0 0 0 15px;
`;

const AttrCell = styled.td`
  padding: 0;
`;

const Misspelt = styled.span`
  text-decoration: underline wavy #d8372c;
  text-decoration-thickness: 1.5px;
  text-underline-offset: 5px;
`;

const CategoryTable = styled.table`
  width: 1399px;
  table-layout: fixed;
  border-collapse: collapse;
`;

const CategoryRow = styled.tr<{ $h: number; $head?: boolean }>`
  height: ${(p) => p.$h}px;
  border-bottom: 2px ${(p) => (p.$head ? 'solid #cfcfcf' : 'dashed #a8a8a8')};
  &:last-child {
    border-bottom: none;
  }
`;

const CategoryCell = styled.td`
  padding: 0;
  text-align: center;
  line-height: 37px;
`;

const StatusBar = styled.div`
  flex: none;
  box-sizing: border-box;
  height: 46px;
  display: flex;
  align-items: center;
  justify-content: space-between;
  border-top: 3px solid #a9a9a9;
  background: linear-gradient(#e8e8e8, #d3d3d3);
`;

const StatusLeft = styled.div`
  display: flex;
  align-items: center;
  padding-left: 49px;
`;

const StatusText = styled.span`
  font-size: 23.8px;
  color: #5f5f5f;
  margin-right: 43px;
`;

const BookSlot = styled.div`
  margin: 0 39px 0 -3px;
  width: 31px;
`;

const StatusRight = styled.div`
  display: flex;
  align-items: center;
  height: 100%;
`;

const FocusLabel = styled.span`
  width: 87px;
  margin-left: 19px;
  font-size: 23.8px;
  color: #5f5f5f;
`;

const ViewActive = styled.div`
  width: 74px;
  height: 46px;
  display: flex;
  align-items: center;
  justify-content: center;
  background: #a6a6a6;
`;

const ViewSlot = styled.div<{ $w: number }>`
  width: ${(p) => p.$w}px;
  display: flex;
  justify-content: center;
`;

const ZoomMinus = styled.div`
  width: 16px;
  height: 5px;
  margin: 0 14px 0 20px;
  background: #6f6f6f;
  border-radius: 1px;
`;

const ZoomTrack = styled.div`
  position: relative;
  width: 200px;
  height: 8px;
  border-radius: 4px;
  background: #9b9b9b;
`;

const ZoomThumb = styled.div`
  position: absolute;
  left: 95px;
  top: -12px;
  width: 32px;
  height: 32px;
  border-radius: 50%;
  background: #fff;
  box-shadow: 0 1px 3px rgba(0, 0, 0, 0.3);
`;

const ZoomPlus = styled.div`
  margin: 0 33px 0 14px;
`;

const ZoomValue = styled.span`
  width: 112px;
  font-size: 23.8px;
  color: #5f5f5f;
`;

export default App;
